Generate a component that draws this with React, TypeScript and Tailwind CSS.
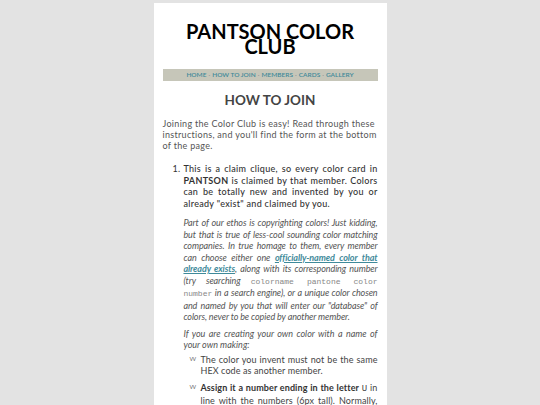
const body = "font-['Lato','Noto_Sans',sans-serif]";

function Sub({ children }: { children: React.ReactNode }) {
  return (
    <li className="flex">
      <span className="w-[11px] shrink-0 text-[7px] leading-[9px] text-[#777] tracking-[-0.6px]">vv</span>
      <div className="flex-1 text-justify">{children}</div>
    </li>
  );
}

export default function App() {
  const nav = ["HOME", "HOW TO JOIN", "MEMBERS", "CARDS", "GALLERY"];
  return (
    <div className={`min-h-screen bg-[#e3e3e3] flex justify-center ${body}`}>
      <div className="w-[233px] mt-[3px] bg-white px-[9px] pb-4 h-[402px] overflow-hidden">
        <h1 className="mt-[21px] text-center text-[20px] leading-[15px] font-bold text-black">
          PANTSON COLOR
          <br />
          CLUB
        </h1>

        <nav className="mt-[15px] h-[12px] bg-[#c6c6b9] flex items-center justify-center gap-[2px] text-[6.5px] font-semibold text-[#3f8a9a]">
          {nav.map((n, i) => (
            <span key={n} className="flex items-center gap-[2px]">
              {i > 0 && <span className="text-[#999]">·</span>}
              <span>{n}</span>
            </span>
          ))}
        </nav>

        <h2 className="mt-[10px] text-center text-[13.5px] leading-[18px] font-bold text-[#444]">
          HOW TO JOIN
        </h2>

        <div className="tracking-[0.3px]">
          <p className="mt-[9px] text-[9px] leading-[11px] text-[#555]">
            Joining the Color Club is easy! Read through these instructions, and you'll find the
            form at the bottom of the page.
          </p>

          <ol className="mt-[12px] pl-[10px] text-[9px] leading-[11.5px]">
            <li className="flex gap-[3px]">
              <span className="shrink-0 text-[#333]">1.</span>
              <div className="flex-1">
                <p className="text-justify text-[#333] font-medium">
                  This is a claim clique, so every color card in <b>PANTSON</b> is claimed by that
                  member. Colors can be totally new and invented by you or already "exist" and
                  claimed by you.
                </p>
                <p className="mt-[8px] italic text-justify text-[#555] tracking-[-0.1px]">
                  Part of our ethos is copyrighting colors! Just kidding, but that is true of
                  less-cool sounding color matching companies. In true homage to them, every member
                  can choose either one{" "}
                  <a className="font-bold text-[#3f8a9a] underline">
                    officially-named color that already exists
                  </a>
                  , along with its corresponding number (try searching{" "}
                  <code className="not-italic tracking-normal font-['Liberation_Mono',monospace] text-[8px] text-[#888]">
                    colorname pantone color number
                  </code>{" "}
                  in a search engine), or a unique color chosen and named by you that will enter
                  our "database" of colors, never to be copied by another member.
                </p>
                <p className="mt-[5px] italic text-justify text-[#555] tracking-normal">
                  If you are creating your own color with a name of your own making:
                </p>
                <ul className="mt-[3px] pl-[6px] flex flex-col gap-[5px] text-[#444] tracking-[0.1px]">
                  <Sub>The color you invent must not be the same HEX code as another member.</Sub>
                  <Sub>
                    <b className="text-[#333]">Assign it a number ending in the letter</b>{" "}
                    <span className="font-['Liberation_Mono',monospace]">U</span> in line with the
                    numbers (6px tall). Normally, these numbers are pretty random.
                  </Sub>
                </ul>
              </div>
            </li>
          </ol>
        </div>
      </div>
    </div>
  );
}
